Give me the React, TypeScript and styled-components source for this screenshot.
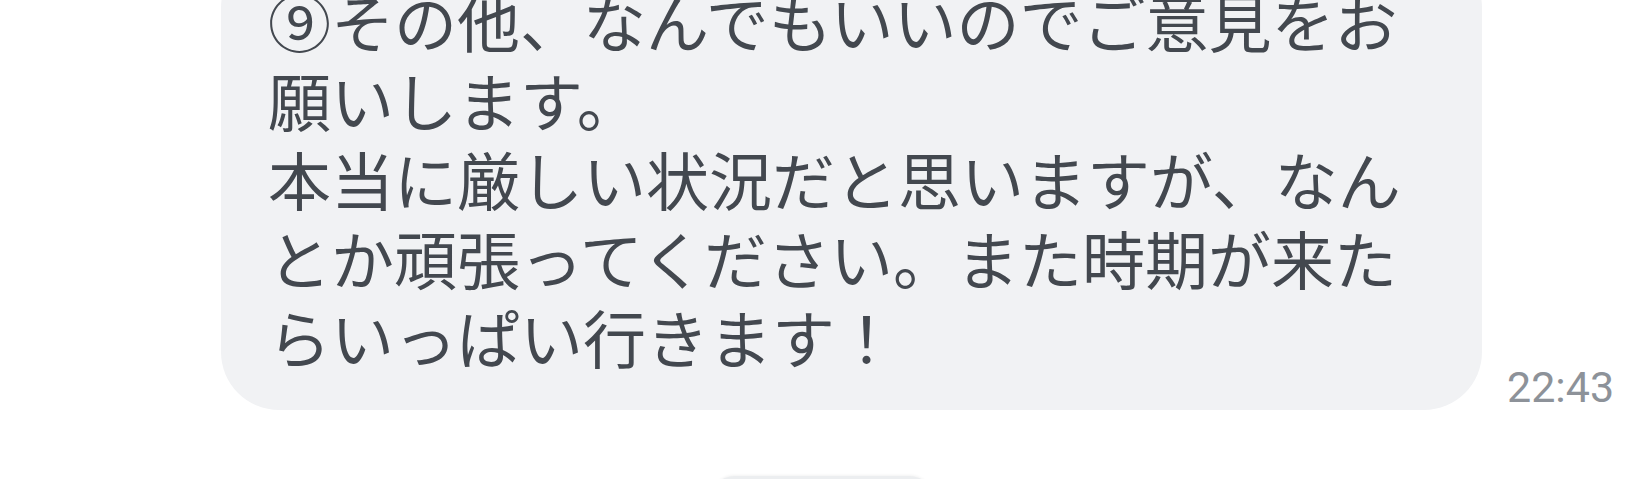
import React from "react";
import styled, { createGlobalStyle } from "styled-components";

const GlobalStyle = createGlobalStyle`
	html, body {
		margin: 0;
		padding: 0;
		background: #ffffff;
	}
`;

const message = [
	"⑨その他、なんでもいいのでご意見をお願いします。",
	"本当に厳しい状況だと思いますが、なんとか頑張ってください。また時期が来たらいっぱい行きます！",
];

function App() {
	return (
		<>
			<GlobalStyle />
			<Screen>
				<MessageRow>
					<Bubble>
						{message.map((line, i) => (
							<Line key={i}>{line}</Line>
						))}
					</Bubble>
					<Time>22:43</Time>
				</MessageRow>
				<DatePill />
			</Screen>
		</>
	);
}

const Screen = styled.div`
	width: 1644px;
	height: 479px;
	overflow: hidden;
	background: #ffffff;
	display: flex;
	flex-direction: column;
	align-items: center;
`;

const MessageRow = styled.div`
	align-self: stretch;
	display: flex;
	align-items: flex-end;
	gap: 25px;
	padding-left: 221px;
	margin-top: -50px;
`;

const Bubble = styled.div`
	width: 1134px;
	padding: 30px 80px 35px 47px;
	background: #f1f2f4;
	border-radius: 58px;
	font-family: "Noto Sans CJK JP", "Noto Sans", sans-serif;
	font-size: 63px;
	line-height: 79px;
	color: #43484f;
`;

const Line = styled.div`
	word-break: break-all;
`;

const Time = styled.div`
	font-family: Roboto, "Liberation Sans", sans-serif;
	font-size: 43px;
	line-height: 1;
	color: #8d9299;
	padding-bottom: 1px;
`;

const DatePill = styled.div`
	margin-top: 66px;
	width: 220px;
	height: 44px;
	flex-shrink: 0;
	border-radius: 22px;
	background: #eceef0;
	box-shadow: 0 -1px 3px rgba(0, 0, 0, 0.05);
`;

export default App;
